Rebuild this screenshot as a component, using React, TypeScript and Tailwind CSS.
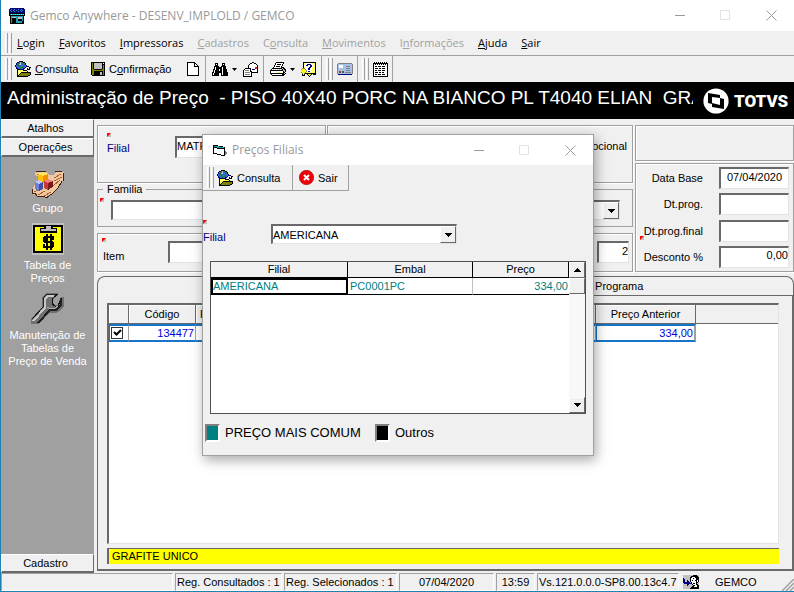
import { useState } from 'react';
import type { ReactNode } from 'react';

const COLORS: Record<string, string> = {
  k: '#000000',
  w: '#ffffff',
  g: '#808080',
  l: '#c0c0c0',
  b: '#4060e0',
  n: '#000080',
  c: '#20a0b0',
  y: '#ffff60',
  Y: '#ffff00',
  o: '#808000',
  t: '#108040',
  r: '#e02020',
  s: '#a8c0e8',
};

const GLOBE_FOLDER = [
  '....kkkk........',
  '..nnblbtkk......',
  '.nbttlbbttn.....',
  '.nttllbbbtn.....',
  'nbtttbbbbbbn....',
  'nbbttbbtbbbnkk..',
  '.nbbttbttbn...kk',
  '.nnbttbbnn..k.k.',
  '..kknnnnk...kkk.',
  '..kyyyyykkkk....',
  '..kywywywywyk...',
  '..kyyykkkkkkkkkk',
  '..kywkoooooooook',
  '..kykooooooooook',
  '..kkoooooooookk.',
  '..kkkkkkkkkkk...',
];

const FLOPPY = [
  'kkkkkkkkkkkkkk',
  'kokllllllllkwk',
  'kokllllllllkkk',
  'kokllllllllkok',
  'kokllllllllkok',
  'kokllllllllkok',
  'kokllllllllkok',
  'kookkkkkkkkook',
  'kooooooooooook',
  'kookkkkkkkkkok',
  'kookkkkkkllkok',
  'kookkkkkkllkok',
  'kookkkkkkllkok',
  '.kkkkkkkkkkkkk',
];

const BINOCULARS = [
  '...kkk....kkk...',
  '...kwk....kwk...',
  '...kkk....kkk...',
  '..kkkkk..kkkkk..',
  '..kwkkkkkkwkkk..',
  '..kwkkkkkkwkkk..',
  '.kkwkkkwkkwkkkk.',
  '.kwkkkkwkkwkkkk.',
  '.kwkkkkkkkwkkkk.',
  'kkwkkkkkkkwkkkkk',
  'kwkkkkk..kwkkkkk',
  'kwkkkkk..kwkkkkk',
  'kkkkkkk..kkkkkkk',
];

const ENVELOPES = [
  '.........kk.....',
  '.......kkwwkk...',
  '......kwwwwwwk..',
  '.....kwwwwwwwwk.',
  '.....kwwwwwwwwk.',
  '.....kwwwwwwrrk.',
  '..kkkkkkwwwwrrk.',
  '.kwwwwwkwnnnwwk.',
  'kwggggwkwwwwwwk.',
  'kwwwwwwkkwwwwwk.',
  'kwgggggwkkkkkkk.',
  'kwwwwwwwk.......',
  'kwgggggwk.......',
  'kwwwwwwwk.......',
  'kkkkkkkkk.......',
];

const PRINTER = [
  '......kkkkkkkk..',
  '.....kwwwwwwwk..',
  '.....kwkkkkwk...',
  '....kwwwwwwwk...',
  '....kwkkkkwk....',
  '...kwwwwwwwkkk..',
  '..kkkkkkkkkklkk.',
  '.kwlwlwlwlwlklkk',
  'kkkkkkkkkkkkkllk',
  'kwwwwwwwwwwwwklk',
  'kwwwwwwYYYwwwkk.',
  'kkkkkkkkkkkkkklk',
  '.kwwwwwwwwwwkkk.',
  '..kkkkkkkkkkkk..',
];

const HELP_BOOK = [
  '..kkkkkkkkkkkkk.',
  '..kyywwwwwwyyyk.',
  '..kywwnnnnwwyyk.',
  '..kwwnnwwnnwyyk.',
  '..kwwwwwwnnwyyk.',
  '..kywwwwnnwyyyk.',
  '.gggwwwnnwwyyyk.',
  'gYYYgwwnnwwyyyk.',
  'YYwYYgwwwwyyyyk.',
  'YYYYYgwnnwyyyyk.',
  'gYYYgyywwyyyyyk.',
  '.gYgkkkkkkkkkkk.',
  '.kYk..kYYYk.kkk.',
  '.kkk...kYk......',
  '........k.......',
];

const CARD = [
  '.gggggggggggggg.',
  'gssssssssssssssg',
  'gswwwwsssssssssg',
  'gswwwwsssggggssg',
  'gswwwwsssssssssg',
  'gssssssssggggssg',
  'gssssssssssssssg',
  'gssssssssggggssg',
  'gsrrsttssssssssg',
  'gsrrsttsggggggsg',
  'gssssssssssssssg',
  '.nnnnnnnnnnnnnn.',
];

const NOTEPAD = [
  '.k.k.k.k.k.k.k.',
  'kkkkkkkkkkkkkkk',
  'kwkwkwkwkwkwkwk',
  'kwwwwwwwwwwwwwk',
  'kwkkwkkkwkkkwwk',
  'kwwwwwwwwwwwwwk',
  'kwkkkwkkwkkkwwk',
  'kwwwwwwwwwwwwwk',
  'kwkkwkkkwkkkwwk',
  'kwwwwwwwwwwwwwk',
  'kwkkkwkkwkkwwwk',
  'kwwwwwwwwwwwwwk',
  'kwkkwkkkwkkkwwk',
  'kwwwwwwwwwwwwwk',
  'kkkkkkkkkkkkkkk',
];

const FORM = [
  'kkkkk.........',
  'kccccckkkk....',
  'kkkkccccccck..',
  'kwwwkkkkkkkk..',
  'kwwwwwwwwwwk..',
  'kwwwwwwwwwwk..',
  'kwwwwwwwwwwkg.',
  'kwwwwwwwwwwkgg',
  'kkkkwwwwwwwkgg',
  '....kkkkwwwkg.',
  '........kkkk..',
];

const USER = [
  'llllllllllkkkkll',
  'llllllllkkkkkkkl',
  'lllllllkkwwwkkkk',
  'nllllllkwwkwwkkk',
  'nnlllllkwwwwwkkk',
  'nnllnllkwkwwkkwk',
  'nnllnnlkwwwwwkwk',
  'nnnnnnnlkwwwwkkl',
  'lnnnnnnnkwkkwkll',
  'llllnnlllkwwwkkl',
  'llllnlllllkkwwkk',
  'lllllllllkkwwwkk',
  'llllllllkkkkkkkk',
  'lllllllkkkkkkkkk',
];

const APP = [
  '.nnnnnnnnnnnnnn.',
  'nncnncnnncnncnnn',
  'ncnncnncnnncncnn',
  'nncnncnnncnncnnn',
  'nnnnnnnnnnnnnnnn',
  'kkkkkkkkkkkkkkkk',
  'kclclclclclclclk',
  'kkkkkkkkkkkkkkkk',
  '.kcccccccccccck.',
  '.kcllllccllllck.',
  '.kckkkkccllllck.',
  '.kckkkkcckkkkck.',
  '.kckkkkcckkkkck.',
  '.kckkkkcccccckk.',
  '.kckkkkcccccckk.',
  '.kkkkkkkkkkkkkk.',
];

function Pixels({ rows }: { rows: string[] }) {
  return (
    <svg
      width={rows[0].length}
      height={rows.length}
      viewBox={`0 0 ${rows[0].length} ${rows.length}`}
      shapeRendering="crispEdges"
      className="shrink-0"
      aria-hidden="true"
    >
      {rows.flatMap((row, y) =>
        row.split('').map((c, x) =>
          c === '.' ? null : <rect key={`${x}-${y}`} x={x} y={y} width="1" height="1" fill={COLORS[c]} />
        )
      )}
    </svg>
  );
}

function GroupIcon() {
  return (
    <svg width="32" height="28" viewBox="0 0 32 28" shapeRendering="crispEdges" aria-hidden="true">
      <path d="M4 2h10l4 3h4l2-3h8v7l-3 4-3 5-7 6-5 3-3-1-4 1-2-1-5-2-1-2 4-8 3-4 1-3-4-2z" fill="#f0c8a0" />
      <path d="M4 1h10M23 1h7M31 3v8M30 11l-4 7-6 6-5 3M1 19l-1 4h3l2 3h5l3 1h3" fill="none" stroke="#402010" strokeWidth="1" />
      <path d="M22 8l7-4M22 11l8-4M21 16l7-6M5 4h6M2 22l6-3M6 25l7-4M12 26l7-4" fill="none" stroke="#b06030" strokeWidth="1" />
      <path d="M11 2l5 2v7l-5 2-5-2V4z" fill="#ffc000" />
      <path d="M11 2l5 2-5 2-5-2z" fill="#ffe860" />
      <path d="M11 6l5-2v7l-5 2z" fill="#f09000" />
      <path d="M7 10l4 2v7l-4 2-4-2v-7z" fill="#7080d8" />
      <path d="M7 10l4 2-4 2-4-2z" fill="#b8c8ff" />
      <path d="M7 14l4-2v7l-4 2z" fill="#4050a0" />
      <path d="M16 9l5 2v6l-5 3-4-2v-7z" fill="#c83838" />
      <path d="M16 9l5 2-5 2-4-2z" fill="#f08080" />
      <path d="M16 13l5-2v6l-5 3z" fill="#801818" />
    </svg>
  );
}

function PriceTableIcon() {
  return (
    <svg width="32" height="32" viewBox="0 0 32 32" shapeRendering="crispEdges" aria-hidden="true">
      <path fill="#c0c0c0" d="M0 0h32v32H0z" />
      <path fill="#000" d="M1 2h30v28H1z" />
      <path fill="#ff0" d="M3 4h26v24H3z" />
      <path fill="#000" d="M8 5h4V2h9v3h4v5H8z" />
      <path fill="#c0c0c0" d="M9 6h15v2H9zM14 3h5v3h-5z" />
      <path
        fill="#000"
        d="M12 13h10v2H12zM11 14h3v5h-3zM12 18h9v2h-9zM19 19h3v5h-3zM11 23h10v2H11zM20 14h2v3h-2zM11 21h2v3h-2zM14 11h2v16h-2zM18 11h2v16h-2z"
      />
    </svg>
  );
}

function WrenchIcon() {
  return (
    <svg width="33" height="33" viewBox="0 0 33 33" shapeRendering="crispEdges" aria-hidden="true">
      <path d="M11 5l4-4h12v2l-4 3-1 5 2 2h3l1-4 2-4h3v9l-4 5-4 2h-6L7 32H0v-5l11-12z" fill="#707070" />
      <path d="M1 27l11-12V6l4-4h10" fill="none" stroke="#202020" strokeWidth="1" />
      <path d="M2 29l12-13V7l3-3h6" fill="none" stroke="#c8c8c8" strokeWidth="2" />
      <path d="M7 31l12-13h6l5-5V6" fill="none" stroke="#202020" strokeWidth="2" />
      <path d="M27 2l-5 4-1 6 3 2h3l2-5" fill="none" stroke="#101010" strokeWidth="1" />
      <path d="M16 15l2 1h6l3-2" fill="none" stroke="#b0b0b0" strokeWidth="1" />
    </svg>
  );
}

function TotvsMark() {
  return (
    <svg width="26" height="26" viewBox="0 0 26 26" aria-hidden="true">
      <circle cx="13" cy="13" r="12.6" fill="#fff" />
      <path d="M5 5l12 2v3l4 1v10L9 19v-3l-4-1z" fill="#000" />
      <path d="M9 9l8 1v7l-8-2z" fill="#fff" />
    </svg>
  );
}

function Flag({ className }: { className: string }) {
  return (
    <svg width="4" height="4" viewBox="0 0 4 4" className={`absolute ${className}`} aria-hidden="true">
      <path d="M0 0h4v4H0z" fill="#c0c0c0" />
      <path d="M0 0h4L0 4z" fill="#f00" />
    </svg>
  );
}

function Grip() {
  return (
    <span className="flex gap-px self-stretch py-0.5 pl-1">
      <span className="w-[3px] border-r border-l border-r-[#a0a0a0] border-l-white" />
      <span className="w-[3px] border-r border-l border-r-[#a0a0a0] border-l-white" />
    </span>
  );
}

function Arrow({ up = false }: { up?: boolean }) {
  return (
    <svg width="7" height="4" viewBox="0 0 7 4" shapeRendering="crispEdges" className="shrink-0" aria-hidden="true">
      <path d={up ? 'M3 0h1v1h1v1h1v1h1v1H0V3h1V2h1V1h1z' : 'M0 0h7v1H6v1H5v1H4v1H3V3H2V2H1V1H0z'} />
    </svg>
  );
}

const inset = 'border-t-2 border-l-2 border-r border-b border-t-[#696969] border-l-[#696969] border-r-[#e3e3e3] border-b-[#e3e3e3] bg-white';
const raised = 'border border-t-white border-l-white border-r-[#696969] border-b-[#696969] bg-[#f0f0f0]';
const groove = 'border border-[#a0a0a0] shadow-[inset_1px_1px_0_#fff,1px_1px_0_#fff]';

function Combo({ id, label, options, className }: { id: string; label: string; options: string[]; className: string }) {
  return (
    <div className={`flex h-5 ${inset} ${className}`}>
      <select id={id} aria-label={label} className="min-w-0 flex-1 appearance-none leading-4 outline-none">
        {options.map((o) => (
          <option key={o}>{o}</option>
        ))}
      </select>
      <span className={`flex w-4 items-center justify-center ${raised}`}>
        <Arrow />
      </span>
    </div>
  );
}

function WindowButtons() {
  return (
    <div className="ml-auto flex text-[#999]">
      <button aria-label="Minimizar" className="flex w-[46px] items-center justify-center">
        <svg width="11" height="11" viewBox="0 0 11 11" shapeRendering="crispEdges"><path d="M0 5h10v1H0z" fill="currentColor" /></svg>
      </button>
      <button aria-label="Maximizar" disabled className="flex w-[45px] items-center justify-center text-[#e2e2e2]">
        <svg width="11" height="11" viewBox="0 0 11 11"><path d="M.5.5h9v9h-9z" fill="none" stroke="currentColor" /></svg>
      </button>
      <button aria-label="Fechar" className="flex w-[46px] items-center justify-center">
        <svg width="11" height="11" viewBox="0 0 11 11"><path d="M.5.5l10 10M10.5.5l-10 10" fill="none" stroke="currentColor" /></svg>
      </button>
    </div>
  );
}

const menu = [
  { before: '', key: 'L', after: 'ogin' },
  { before: '', key: 'F', after: 'avoritos' },
  { before: '', key: 'I', after: 'mpressoras' },
  { before: '', key: 'C', after: 'adastros', disabled: true },
  { before: 'C', key: 'o', after: 'nsulta', disabled: true },
  { before: '', key: 'M', after: 'ovimentos', disabled: true },
  { before: 'I', key: 'n', after: 'formações', disabled: true },
  { before: '', key: 'A', after: 'juda' },
  { before: '', key: 'S', after: 'air' },
];

function Toolbar() {
  return (
    <div className="flex h-[26px] items-stretch">
      <div className="flex items-center border-r border-[#a0a0a0] pr-1">
        <Grip />
        <button className="ml-[3px] flex w-[76px] items-center gap-1">
          <Pixels rows={GLOBE_FOLDER} />
          <span><u>C</u>onsulta</span>
        </button>
        <button className="flex w-[94px] items-center gap-1">
          <Pixels rows={FLOPPY} />
          <span>C<u>o</u>nfirmação</span>
        </button>
        <button aria-label="Novo" className="flex h-full items-center border-r border-[#a0a0a0] pr-1.5 pl-0.5">
          <svg width="12" height="14" viewBox="0 0 12 14" shapeRendering="crispEdges" className="shrink-0">
            <path d="M.5.5h7l4 4v9H.5z" fill="#fff" stroke="#000" />
            <path d="M7.5.5v4h4" fill="none" stroke="#000" />
          </svg>
        </button>
        <button aria-label="Localizar" className="ml-1.5 flex items-center gap-1">
          <Pixels rows={BINOCULARS} />
          <svg width="5" height="3" viewBox="0 0 5 3"><path d="M0 0h5L2.5 3z" /></svg>
        </button>
        <button aria-label="Enviar" className="ml-1.5 flex h-full items-center border-r border-[#a0a0a0] pr-1">
          <Pixels rows={ENVELOPES} />
        </button>
        <button aria-label="Imprimir" className="ml-1.5 flex items-center gap-1">
          <Pixels rows={PRINTER} />
          <svg width="5" height="3" viewBox="0 0 5 3"><path d="M0 0h5L2.5 3z" /></svg>
        </button>
        <button aria-label="Ajuda" className="ml-1.5">
          <Pixels rows={HELP_BOOK} />
        </button>
      </div>
      <div className="flex items-center border-r border-[#a0a0a0] pr-1">
        <Grip />
        <button aria-label="Cartão" className="ml-1"><Pixels rows={CARD} /></button>
      </div>
      <div className="flex items-center border-r border-[#a0a0a0] pr-1">
        <Grip />
        <button aria-label="Agenda" className="ml-1"><Pixels rows={NOTEPAD} /></button>
      </div>
    </div>
  );
}

function Sidebar() {
  const tab = `block h-[19px] w-full pr-1 text-center leading-4 ${raised} border-b-2`;
  return (
    <aside className="flex w-[93px] shrink-0 flex-col bg-[#a0a0a0] text-center leading-[13px] text-white">
      <button className={`${tab} text-black`}>Atalhos</button>
      <button className={`${tab} text-black`}>Operações</button>
      <nav className="flex flex-1 flex-col items-center pt-[13px] whitespace-nowrap">
        <button className="flex flex-col items-center gap-1">
          <GroupIcon />
          <span>Grupo</span>
        </button>
        <button className="mt-2 flex flex-col items-center gap-1">
          <PriceTableIcon />
          <span>Tabela de<br />Preços</span>
        </button>
        <button className="mt-[7px] flex flex-col items-center gap-1">
          <WrenchIcon />
          <span>Manutenção de<br />Tabelas de<br />Preço de Venda</span>
        </button>
      </nav>
      <button className={`${tab} text-black`}>Cadastro</button>
    </aside>
  );
}

function DateField({ id, label, value = '', flag = false, align = 'text-center' }: { id: string; label: string; value?: string; flag?: boolean; align?: string }) {
  return (
    <div className="relative flex justify-end gap-4">
      {flag && <Flag className="top-4 left-1" />}
      <label htmlFor={id} className="pt-[3px] text-right">{label}</label>
      <input id={id} defaultValue={value} className={`h-[22px] w-[70px] pb-1 outline-none ${align} ${inset}`} />
    </div>
  );
}

function Filters() {
  return (
    <div className="flex gap-0.5">
      <div className="min-w-0 flex-1">
        <div className="flex gap-px">
          <div className={`relative flex h-[58px] w-[229px] items-start pt-2.5 pl-[9px] ${groove}`}>
            <Flag className="top-[7px] left-[9px]" />
            <label htmlFor="filial" className="w-[68px] pt-1 text-[#000080]">Filial</label>
            <input id="filial" defaultValue="MATRIZ" className={`h-[22px] min-w-0 flex-1 pb-1 outline-none ${inset}`} />
          </div>
          <div className={`flex flex-1 items-start justify-end pt-3 pr-[5px] ${groove}`}>Preço Promocional</div>
        </div>
        <fieldset className="relative h-[44px] min-w-0 border border-[#a0a0a0] pr-3 pl-[13px]">
          <legend className="-ml-2 px-1 leading-[13px]">Familia</legend>
          <Flag className="top-0.5 left-0.5" />
          <Combo id="familia" label="Familia" options={['']} className="mt-1" />
        </fieldset>
        <div className={`relative mt-1.5 flex h-[39px] items-start pt-[7px] pl-[5px] ${groove}`}>
          <Flag className="top-1 left-1" />
          <label htmlFor="item" className="w-[65px] pt-[7px]">Item</label>
          <input id="item" className={`h-[22px] w-[100px] outline-none ${inset}`} />
          <input aria-label="Embalagem" defaultValue="2" className={`mr-[3px] ml-auto h-[22px] w-8 pb-1 text-right outline-none ${inset}`} />
        </div>
      </div>
      <div className="flex w-[159px] flex-col gap-0.5">
        <div className={`h-[36px] ${groove}`} />
        <div className={`flex flex-1 flex-col justify-between py-[3px] pr-1 ${groove}`}>
          <DateField id="base" label="Data Base" value="07/04/2020" />
          <DateField id="prog" label="Dt.prog." />
          <DateField id="final" label="Dt.prog.final" flag />
          <DateField id="desconto" label="Desconto %" value="0,00" align="text-right" />
        </div>
      </div>
    </div>
  );
}

function ItemsTable() {
  const [checked, setChecked] = useState(true);
  const th = 'border-r border-b border-[#696969] text-center font-normal shadow-[inset_1px_1px_0_#fff]';
  const td = 'border-y-2 border-y-[#1874c8] border-r border-r-[#a0a0a0] px-px text-right';
  return (
    <table className="w-full table-fixed border-separate border-spacing-0">
      <colgroup>
        <col className="w-5" />
        <col className="w-[67px]" />
        <col />
        <col className="w-[100px]" />
        <col className="w-[82px]" />
      </colgroup>
      <thead>
        <tr className="h-[19px] bg-[#f0f0f0]">
          <th className={th} aria-label="Selecionado" />
          <th className={th}>Código</th>
          <th className={`${th} pl-1 text-left`}>F</th>
          <th className={th}>Preço Anterior</th>
          <th className="border-b border-[#696969]" />
        </tr>
      </thead>
      <tbody>
        <tr className="h-[18px] leading-[14px] text-[#0000e0]">
          <td className={`${td} border-l border-l-[#1874c8]`}>
            <label className="flex size-3 items-center justify-center border border-[#333] bg-white">
              <input type="checkbox" aria-label="Selecionar item" checked={checked} onChange={() => setChecked(!checked)} className="sr-only" />
              {checked && (
                <svg width="9" height="8" viewBox="0 0 9 8"><path d="M1 3l2.5 2.5L8 1" fill="none" stroke="#000" strokeWidth="2" /></svg>
              )}
            </label>
          </td>
          <td className={td}>134477</td>
          <td className={td}>334,00</td>
          <td className={`${td} border-r-2 border-l border-r-[#1874c8] border-l-[#1874c8]`}>334,00</td>
          <td />
        </tr>
      </tbody>
    </table>
  );
}

function ToolButton({ children, className }: { children: ReactNode; className: string }) {
  return <button className={`flex items-center gap-1 ${className}`}>{children}</button>;
}

function PriceDialog() {
  const th = 'h-4 border-r border-b border-black text-center leading-[15px] font-normal';
  return (
    <div role="dialog" aria-label="Preços Filiais" className="absolute top-[134px] left-[201px] w-[392px] border border-[#a0a0a0] bg-[#f0f0f0] shadow-[2px_4px_12px_rgba(0,0,0,0.35)]">
      <header className="flex h-[30px] items-stretch bg-white">
        <h2 className="flex items-center gap-[5px] pl-2.5 font-['Open_Sans',sans-serif] text-[12px] text-[#999]">
          <Pixels rows={FORM} />
          Preços Filiais
        </h2>
        <WindowButtons />
      </header>
      <div className="flex h-[26px] w-[146px] items-stretch border-r border-b border-[#a0a0a0]">
        <Grip />
        <ToolButton className="ml-[3px] w-[76px] border-r border-[#a0a0a0]">
          <Pixels rows={GLOBE_FOLDER} />
          Consulta
        </ToolButton>
        <ToolButton className="ml-1.5">
          <svg width="15" height="15" viewBox="0 0 15 15">
            <circle cx="7.5" cy="7.5" r="7.2" fill="#f00008" stroke="#900" strokeWidth=".6" />
            <path d="M5 5l5 5M10 5l-5 5" stroke="#fff" strokeWidth="2" />
          </svg>
          Sair
        </ToolButton>
      </div>

      <div className="relative mt-[33px] flex items-start">
        <Flag className="-top-1 left-0" />
        <label htmlFor="filial-preco" className="w-[68px] pt-[5px] text-[#000080]">Filial</label>
        <Combo id="filial-preco" label="Filial" options={['AMERICANA']} className="w-[186px]" />
      </div>

      <div className="mx-[7px] mt-4 flex h-[153px] border border-[#505050] bg-white">
        <div className="flex-1">
          <table className="w-full table-fixed border-separate border-spacing-0">
            <colgroup>
              <col className="w-[137px]" />
              <col className="w-[125px]" />
              <col />
            </colgroup>
            <thead className="bg-[#f0f0f0]">
              <tr>
                <th className={th}>Filial</th>
                <th className={th}>Embal</th>
                <th className={th}>Preço</th>
              </tr>
            </thead>
            <tbody className="leading-[13px] text-[#008080]">
              <tr>
                <td className="h-4 border-2 border-black">AMERICANA</td>
                <td className="h-4 border-r border-b border-r-[#c0c0c0] border-b-black pl-0.5">PC0001PC</td>
                <td className="h-4 border-b border-black pr-px text-right">334,00</td>
              </tr>
            </tbody>
          </table>
        </div>
        <div className="flex w-4 flex-col bg-[#f8f8f8]">
          <button aria-label="Rolar para cima" className={`flex h-4 items-center justify-center ${raised}`}><Arrow up /></button>
          <div className={`h-4 ${raised}`} />
          <button aria-label="Rolar para baixo" className={`mt-auto flex h-4 items-center justify-center ${raised}`}><Arrow /></button>
        </div>
      </div>

      <div className="flex items-center px-0.5 pt-2.5 pb-[13px] text-[13px] leading-[18px]">
        <span className="h-[18px] w-[15px] border-2 border-t-[#808080] border-r-white border-b-white border-l-[#808080] bg-[#008080]" />
        <span className="w-[155px] pl-[5px]">PREÇO MAIS COMUM</span>
        <span className="h-[18px] w-[15px] border-2 border-t-[#808080] border-r-white border-b-white border-l-[#808080] bg-black" />
        <span className="pl-[5px]">Outros</span>
      </div>
    </div>
  );
}

export default function App() {
  const cell = 'border border-t-[#a0a0a0] border-l-[#a0a0a0] border-r-white border-b-white leading-[16px]';
  return (
    <div className="relative flex min-h-screen flex-col overflow-hidden border-b border-l border-[#2080b0] bg-[#f0f0f0] font-['Liberation_Sans',Arial,sans-serif] text-[11px] leading-4 text-black">
      <header className="flex h-[31px] items-stretch bg-white">
        <h1 className="flex items-center gap-[5px] pl-2 font-['Open_Sans',sans-serif] text-[12px] text-[#999]">
          <Pixels rows={APP} />
          Gemco Anywhere - DESENV_IMPLOLD / GEMCO
        </h1>
        <WindowButtons />
      </header>

      <nav className="flex h-[25px] items-center border-b border-[#a0a0a0] font-['Open_Sans',sans-serif]">
        <Grip />
        <div className="ml-[5px] flex gap-[14px]">
          {menu.map((m) => (
            <button key={m.before + m.key + m.after} disabled={m.disabled} className={m.disabled ? 'text-[#a0a0a0]' : ''}>
              {m.before}<u>{m.key}</u>{m.after}
            </button>
          ))}
        </div>
      </nav>

      <Toolbar />

      <div className="flex h-[37px] items-center bg-black text-white">
        <p className="min-w-0 flex-1 overflow-hidden pb-1.5 pl-1.5 text-[19px] leading-7 whitespace-pre">
          {'Administração de Preço  - PISO 40X40 PORC NA BIANCO PL T4040 ELIAN  GRAFITE'}
        </p>
        <div className="flex w-[101px] shrink-0 items-center gap-[5px] pl-2.5">
          <TotvsMark />
          <span className="font-['Roboto',sans-serif] text-[17px] font-black">TOTVS</span>
        </div>
      </div>

      <main className="flex flex-1">
        <Sidebar />
        <div className="flex min-w-0 flex-1 flex-col pt-1.5 pb-0.5 pl-[3px]">
          <Filters />
          <div className="mt-1 flex flex-1 flex-col">
            <div role="tablist" className="flex h-5 overflow-hidden rounded-t-lg border-t border-r border-l border-[#696969]">
              <button role="tab" aria-selected="true" aria-label="Produtos" className="flex-1" />
              <button role="tab" aria-selected="false" className="flex-1 border-b border-[#696969]">Programa</button>
            </div>
            <div className="flex flex-1 flex-col gap-1 border-r-2 border-b-2 border-l border-[#696969] pt-[7px] pr-[13px] pb-[5px] pl-[9px]">
              <div className={`flex-1 ${inset}`}>
                <ItemsTable />
              </div>
              <div className="h-4 border-t border-l-2 border-[#696969] bg-[#ffff00] pl-[3px] leading-[15px]">GRAFITE UNICO</div>
            </div>
          </div>
        </div>
      </main>

      <footer className="flex h-[18px] gap-0.5 whitespace-nowrap">
        <div className={`flex-1 ${cell}`} />
        <div className={`w-[107px] pl-px ${cell}`}>Reg. Consultados : 1</div>
        <div className={`w-[113px] pl-px ${cell}`}>Reg. Selecionados : 1</div>
        <div className={`w-[95px] text-center ${cell}`}>07/04/2020</div>
        <div className={`w-[39px] text-center ${cell}`}>13:59</div>
        <div className={`w-[142px] pl-px ${cell}`}>Vs.121.0.0.0-SP8.00.13c4.7</div>
        <div className="flex w-[113px] items-center gap-4 pl-0.5">
          <Pixels rows={USER} />
          <span>GEMCO</span>
          <svg width="12" height="12" viewBox="0 0 12 12" className="ml-auto self-end" aria-hidden="true">
            <path d="M0 12L12 0M4 12l8-8M8 12l4-4" stroke="#a0a0a0" strokeWidth="1.5" />
          </svg>
        </div>
      </footer>

      <PriceDialog />
    </div>
  );
}
